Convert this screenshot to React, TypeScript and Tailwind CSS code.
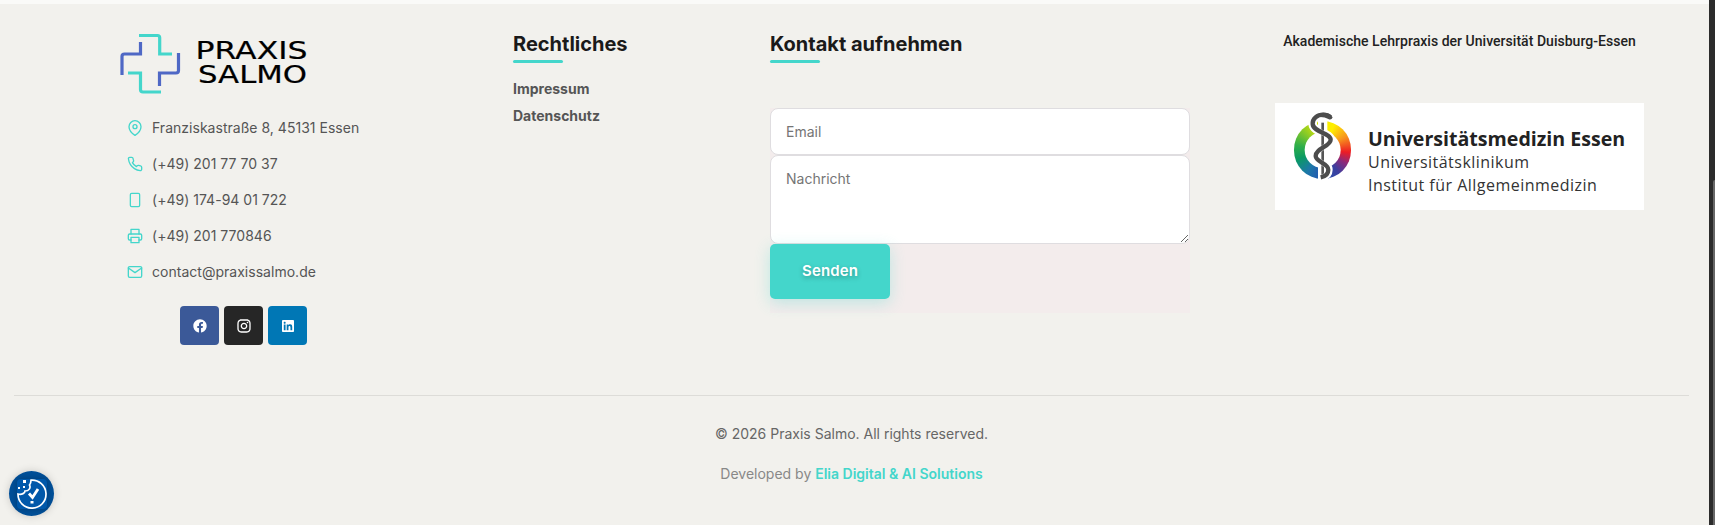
import React from "react";
import { FiMapPin, FiPhone, FiPrinter, FiMail } from "react-icons/fi";
import { RiFacebookCircleFill, RiInstagramLine, RiLinkedinBoxFill } from "react-icons/ri";

function PhoneOutline({ size = 16, className }: { size?: number; className?: string }) {
  return (
    <svg width={size} height={size} viewBox="0 0 24 24" fill="none" stroke="currentColor" strokeWidth="1.9" className={className}>
      <rect x="5" y="2" width="14" height="20" rx="2" />
    </svg>
  );
}

const contacts = [
  { Icon: FiMapPin, text: "Franziskastraße 8, 45131 Essen" },
  { Icon: FiPhone, text: "(+49) 201 77 70 37" },
  { Icon: PhoneOutline, text: "(+49) 174-94 01 722" },
  { Icon: FiPrinter, text: "(+49) 201 770846" },
  { Icon: FiMail, text: "contact@praxissalmo.de" },
];

function Logo() {
  return (
    <svg width="192" height="64" viewBox="0 0 192 64" fill="none" className="block" aria-label="Praxis Salmo">
      <g strokeWidth="3.2">
        <path d="M19 3.5H37.5Q39.7 3.5 39.7 5.7V22H52" stroke="#44d6cb" />
        <path d="M20.5 10V22H4.5Q2 22 2 24.5V43" stroke="#4f68c5" />
        <path d="M8 41H20.5V57.5Q20.5 60 23 60H41" stroke="#44d6cb" />
        <path d="M58.5 21V38.5Q58.5 41 56 41H39.5V54" stroke="#4f68c5" />
      </g>
      <g fill="#000" stroke="#000" strokeWidth="0.2" fontFamily="'DejaVu Sans', sans-serif" fontSize="24.2">
        <text x="75.5" y="27" textLength="112" lengthAdjust="spacingAndGlyphs">PRAXIS</text>
        <text x="78" y="51" textLength="109" lengthAdjust="spacingAndGlyphs">SALMO</text>
      </g>
    </svg>
  );
}

function Heading({ children }: { children: React.ReactNode }) {
  return (
    <h3 className="text-[20px] leading-6 font-bold text-[#1a1a1a]">
      {children}
      <span className="mt-1 block h-[3px] w-[50px] rounded-sm bg-[#44d6cb]" />
    </h3>
  );
}

const snake =
  "M137 37Q128 29 115 29C96 29 82 41 83 57C85 82 137 84 137 104C137 124 92 130 92 153C92 172 130 174 130 194C130 208 121 214 107 217";

function Emblem() {
  return (
    <div className="relative h-20 w-20 shrink-0">
      <div className="absolute top-[16px] left-[9px] h-[58px] w-[57px] rounded-full bg-[conic-gradient(#f5ee00_0deg,#ffee00_25deg,#f7941d_60deg,#ed1c24_95deg,#8a2a7c_120deg,#3a3f9f_145deg,#2458b0_185deg,#1d78a8_215deg,#0a9a62_250deg,#2fae4a_280deg,#a4d31c_325deg,#e6e600_360deg)]" />
      <svg viewBox="0 0 240 240" className="absolute inset-0 h-20 w-20" fill="none">
        <circle cx="113" cy="135" r="54" fill="#fff" />
        <path d={snake} stroke="#fff" strokeWidth="26" />
        <path d="M113 46V224" stroke="#fff" strokeWidth="28" />
        <path d="M113 53V213" stroke="#555" strokeWidth="8" />
        <path d={snake} stroke="#fff" strokeWidth="16" strokeOpacity="0.5" />
        <path d={snake} stroke="#4c4c4c" strokeWidth="13" />
        <path d="M108 24Q131 21 143 37Q139 47 130 42Q120 36 106 36Z" fill="#4c4c4c" />
      </svg>
    </div>
  );
}

export default function App() {
  return (
    <div className="flex h-[525px] overflow-hidden bg-[#f2f1ed] font-['Inter',sans-serif]">
      <footer className="w-[1709px] border-t-4 border-[#fafaf8] px-3.5 pr-5">
        <div className="flex h-[392px] border-b border-[#dddcd8] pl-[106px]">
          <div className="w-[393px] pt-7">
            <Logo />
            <ul className="mt-[14px] ml-[7px]">
              {contacts.map(({ Icon, text }) => (
                <li key={text} className="flex h-9 items-center gap-[9px] text-[14px] text-[#555]">
                  <Icon size={16} className="text-[#44d6cb]" />
                  <span className="-mt-0.5 tracking-[0.02px]">{text}</span>
                </li>
              ))}
            </ul>
            <div className="mt-4 ml-[60px] flex gap-[5px] text-white">
              <a className="flex size-[39px] items-center justify-center rounded bg-[#3b5998]"><RiFacebookCircleFill size={16} /></a>
              <a className="flex size-[39px] items-center justify-center rounded bg-[#262626]"><RiInstagramLine size={16} /></a>
              <a className="flex size-[39px] items-center justify-center rounded bg-[#0077b5]"><RiLinkedinBoxFill size={16} /></a>
            </div>
          </div>

          <div className="w-[257px] pt-7">
            <Heading>Rechtliches</Heading>
            <nav className="mt-3 flex flex-col text-[14px] leading-[27px] font-bold text-[#555]">
              <a>Impressum</a>
              <a>Datenschutz</a>
            </nav>
          </div>

          <div className="w-[420px] pt-7">
            <Heading>Kontakt aufnehmen</Heading>
            <form className="mt-[45px] h-[205px] bg-[#f3ecec] text-[14px]">
              <input placeholder="Email" className="block h-[47px] w-full rounded-lg border border-[#dfdde0] bg-white px-[15px] placeholder:text-[#757575]" />
              <textarea placeholder="Nachricht" className="block h-[89px] w-full rounded-lg border border-[#dfdde0] bg-white px-[15px] py-3 leading-[21px] placeholder:text-[#757575]" />
              <button type="button" className="block h-[55px] w-[120px] rounded-[5px] bg-[#44d6cb] text-[15px] font-semibold tracking-[0.1px] text-white shadow-[0_4px_15px_rgba(68,214,203,0.3)] [text-shadow:0_2px_5px_rgba(0,0,0,0.3)]">
                Senden
              </button>
            </form>
          </div>

          <div className="ml-[85px] w-[369px] pt-[27px]">
            <p className="text-center font-['Roboto',sans-serif] text-[14px] leading-5 font-medium tracking-[0.03px] whitespace-nowrap text-[#222]">
              Akademische Lehrpraxis der Universität Duisburg-Essen
            </p>
            <div className="mt-[52px] flex h-[107px] bg-white pt-0.5 pl-2.5 font-['Open_Sans',sans-serif] text-[#333]">
              <Emblem />
              <div className="ml-[3px] pt-[22px] whitespace-nowrap">
                <div className="text-[19.6px] leading-6 font-bold text-[#222]">Universitätsmedizin Essen</div>
                <div className="text-[16px] leading-[23px] tracking-[0.48px]">Universitätsklinikum</div>
                <div className="text-[16px] leading-[23px] tracking-[0.48px]">Institut für Allgemeinmedizin</div>
              </div>
            </div>
          </div>
        </div>

        <div className="pt-7 text-center text-[14px] leading-5">
          <p className="text-[#666]">© 2026 Praxis Salmo. All rights reserved.</p>
          <p className="mt-5 text-[#888]">
            Developed by <a className="font-semibold text-[#44d6cb]">Elia Digital &amp; AI Solutions</a>
          </p>
        </div>
      </footer>

      <div className="flex w-1.5 flex-col bg-[#2c2c2c] pt-[180px] pl-1">
        <div className="flex-1 rounded-tl-sm bg-[#686868]" />
      </div>

      <button className="fixed bottom-[9px] left-[9px] flex size-[45px] items-center justify-center rounded-full bg-[#004f98] shadow-[0_0_8px_rgba(0,0,0,0.16)]">
        <span className="flex size-[30px] items-center justify-center rounded bg-[#0058aa] shadow-[0_0_6px_rgba(0,0,0,0.25)]">
          <svg width="30" height="30" viewBox="0 0 30 30" fill="none">
            <path d="M14 1.2A14 14 0 1 1 1 15C5 16 8 14 8 12C12 12 14 9 12.5 6Q14 4 14 1.2Z" stroke="#fff" strokeWidth="1.7" />
            <path d="M12 14.5L15.5 18.5L21 10" stroke="#fff" strokeWidth="2.8" />
            <path d="M6 1h3v3H6zM1 8h2v2H1zM6 7h2v2H6zM13.5 22h3v2.5h-3z" fill="#fff" />
          </svg>
        </span>
      </button>
    </div>
  );
}
